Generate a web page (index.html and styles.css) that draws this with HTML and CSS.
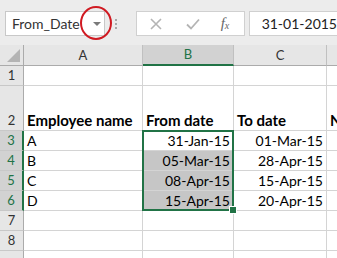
FILE: index.html
```html
<!DOCTYPE html>
<html>
<head>
<meta charset="utf-8">
<link rel="stylesheet" href="styles.css">
</head>
<body>
<div class="app">
  <div class="toolbar">
    <div class="namebox">
      <span class="nb-text">From_Date</span>
      <span class="nb-arrow"></span>
      <span class="ring"></span>
    </div>
    <div class="dots"><i></i><i></i><i></i></div>
    <div class="fbtns">
      <svg class="ic" width="14" height="14" viewBox="0 0 14 14"><path d="M2 2L12 12M12 2L2 12" stroke="#b4b4b4" stroke-width="1.6" fill="none"/></svg>
      <svg class="ic" width="16" height="14" viewBox="0 0 16 14"><path d="M2 7.5L6 11.5L14 2.5" stroke="#b4b4b4" stroke-width="1.8" fill="none"/></svg>
      <span class="fx">f<sub>x</sub></span>
    </div>
    <div class="fbar">31-01-2015</div>
  </div>
  <div class="sheet">
    <div class="corner"><span class="tri"></span></div>
    <div class="ch">A</div>
    <div class="ch sel">B</div>
    <div class="ch">C</div>
    <div class="ch last"></div>

    <div class="rh">1</div><div class="c"></div><div class="c"></div><div class="c"></div><div class="c last"></div>
    <div class="rh">2</div><div class="c b">Employee name</div><div class="c b">From date</div><div class="c b">To date</div><div class="c b last">N</div>
    <div class="rh sel">3</div><div class="c">A</div><div class="c r">31-Jan-15</div><div class="c r">01-Mar-15</div><div class="c last"></div>
    <div class="rh sel">4</div><div class="c">B</div><div class="c r g">05-Mar-15</div><div class="c r">28-Apr-15</div><div class="c last"></div>
    <div class="rh sel">5</div><div class="c">C</div><div class="c r g">08-Apr-15</div><div class="c r">15-Apr-15</div><div class="c last"></div>
    <div class="rh sel">6</div><div class="c">D</div><div class="c r g">15-Apr-15</div><div class="c r">20-Apr-15</div><div class="c last"></div>
    <div class="rh">7</div><div class="c"></div><div class="c"></div><div class="c"></div><div class="c last"></div>
    <div class="rh">8</div><div class="c"></div><div class="c"></div><div class="c"></div><div class="c last"></div>
    <div class="rh"></div><div class="c"></div><div class="c"></div><div class="c"></div><div class="c last"></div>

    <div class="selection"><span class="handle"></span></div>
  </div>
</div>
</body>
</html>
```
FILE: styles.css
```css
html, body {
  margin: 0;
  padding: 0;
  background: #ffffff;
}
.app {
  width: 337px;
  height: 258px;
  overflow: hidden;
  font-family: Lato, "Liberation Sans", sans-serif;
}
.toolbar {
  height: 45px;
  box-sizing: border-box;
  background: #ececec;
  display: flex;
  align-items: flex-start;
  padding: 11px 0 0 5px;
}
.namebox {
  position: relative;
  width: 105px;
  height: 25px;
  box-sizing: border-box;
  background: #fff;
  border: 1px solid #c8c8c8;
  display: flex;
  align-items: center;
  padding-left: 6px;
  font-size: 14px;
  color: #333;
}
.nb-text { flex: 1; }
.nb-arrow {
  width: 0; height: 0;
  border-left: 4px solid transparent;
  border-right: 4px solid transparent;
  border-top: 4px solid #7a7a7a;
  margin-right: 3px;
}
.ring {
  position: absolute;
  left: 74px;
  top: -6px;
  width: 28px;
  height: 30px;
  border: 2.5px solid #d01a22;
  border-radius: 50%;
}
.dots {
  width: 10px;
  margin-left: 6px;
  height: 25px;
  display: flex;
  flex-direction: column;
  align-items: center;
  justify-content: center;
  gap: 2px;
}
.dots i {
  width: 2px; height: 2px;
  background: #a8a8a8;
  display: block;
}
.fbtns {
  margin-left: 15px;
  width: 109px;
  flex: none;
  height: 25px;
  box-sizing: border-box;
  background: #fff;
  border: 1px solid #d0d0d0;
  display: flex;
  align-items: center;
  padding-left: 12px;
}
.fbtns .ic { display: block; }
.fbtns .ic + .ic { margin-left: 22px; }
.fx {
  margin-left: 20px;
  font-family: "Liberation Serif", serif;
  font-style: italic;
  font-size: 15px;
  color: #666;
}
.fx sub { font-size: 10px; vertical-align: -1px; }
.fbar {
  margin-left: 4px;
  flex: 1;
  height: 25px;
  box-sizing: border-box;
  background: #fff;
  border: 1px solid #d0d0d0;
  border-right: none;
  padding-left: 12px;
  display: flex;
  align-items: center;
  font-size: 14px;
  color: #222;
  white-space: nowrap;
}
.sheet {
  position: relative;
  display: grid;
  grid-template-columns: 24px 119px 91px 93px 1fr;
  grid-template-rows: 21px 20px 45px repeat(7, 20px);
  font-size: 14px;
  color: #000;
}
.corner {
  background: #e6e6e6;
  border-right: 1px solid #ababab;
  border-bottom: 1px solid #ababab;
  position: relative;
}
.tri {
  position: absolute;
  right: 3px;
  bottom: 3px;
  width: 0; height: 0;
  border-left: 13px solid transparent;
  border-bottom: 13px solid #b4b4b4;
}
.ch {
  background: #e6e6e6;
  border-right: 1px solid #c0c0c0;
  border-bottom: 1px solid #ababab;
  text-align: center;
  font-size: 13px;
  line-height: 20px;
  color: #333;
}
.ch.sel {
  background: #d2d2d2;
  border-bottom: 2px solid #217346;
  color: #217346;
  line-height: 19px;
}
.ch.last { border-right: none; }
.rh {
  background: #e6e6e6;
  border-right: 1px solid #ababab;
  border-bottom: 1px solid #c8c8c8;
  text-align: center;
  font-size: 13px;
  color: #333;
  display: flex;
  align-items: flex-end;
  justify-content: center;
  line-height: 19px;
}
.rh.sel {
  background: #d2d2d2;
  border-right: 2px solid #217346;
  color: #217346;
}
.c {
  border-right: 1px solid #d4d4d4;
  border-bottom: 1px solid #d4d4d4;
  padding: 0 3px;
  display: flex;
  align-items: flex-end;
  line-height: 19px;
  white-space: nowrap;
  overflow: hidden;
}
.c.last { border-right: none; }
.c.b { font-weight: 700; font-size: 15px; }
.c.r { justify-content: flex-end; }
.c.g { background: #c6c6c6; }
.selection {
  position: absolute;
  grid-column: 3 / 4;
  grid-row: 4 / 8;
  top: -1px;
  left: -1px;
  right: 0;
  bottom: 0;
  border: 2px solid #217346;
  pointer-events: none;
}
.handle {
  position: absolute;
  right: -5px;
  bottom: -5px;
  width: 6px;
  height: 6px;
  background: #217346;
  border: 1px solid #fff;
}
```
